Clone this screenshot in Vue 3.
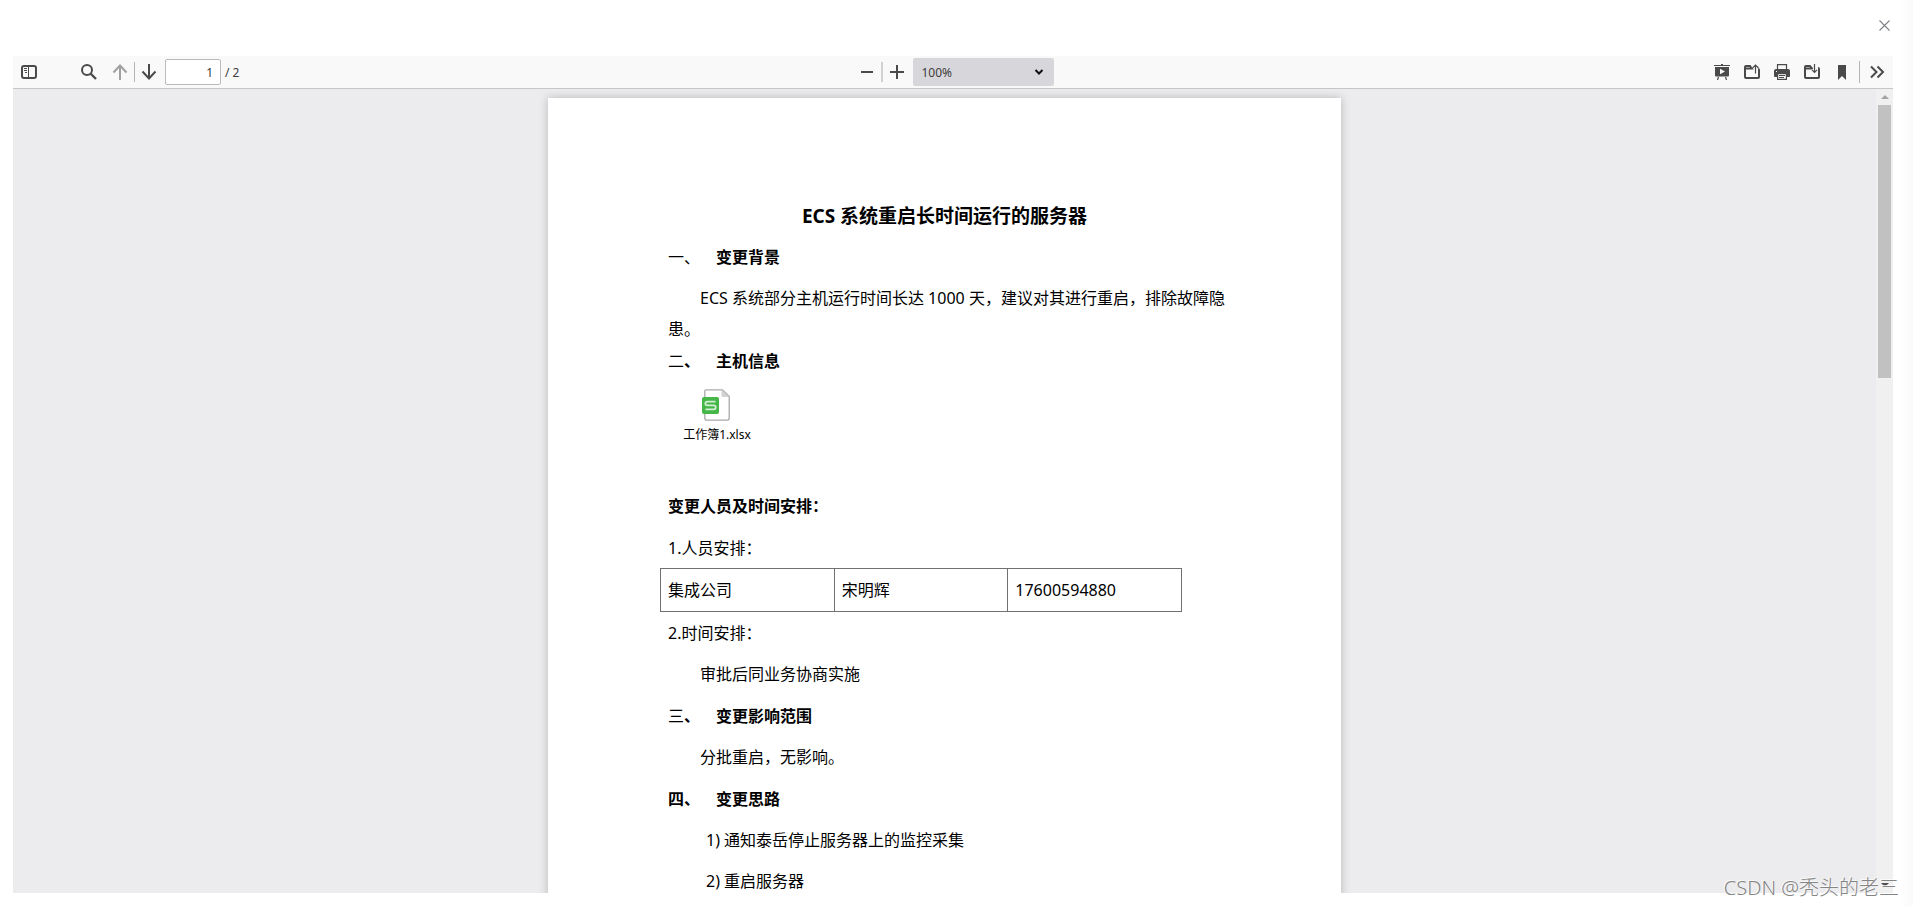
<script setup>
import { ref } from 'vue'

const pageNumber = ref('1')
const scale = ref('100%')
const scales = ['50%', '75%', '100%', '125%', '150%', '200%']
</script>

<template>
  <div class="dialog">
    <header class="dialog-head">
      <button class="close" type="button" aria-label="关闭">
        <svg width="11" height="11" viewBox="0 0 11 11"><path d="M.5.5l10 10M10.500.5l-10 10" stroke="#7f8287" stroke-width="1.100" fill="none" /></svg>
      </button>
    </header>

    <section class="viewer">
      <div class="toolbar">
        <div class="group left">
          <button class="tool" type="button" aria-label="切换侧栏">
            <svg viewBox="0 0 16 16"><rect x="1" y="2" width="14" height="12" rx="2" fill="none" stroke="#4a4a4a" stroke-width="2" /><path d="M7.500 2v12M3 4.500h3M3 6.500h3M4 8.500h2" stroke="#4a4a4a" fill="none" /></svg>
          </button>
          <button class="tool search" type="button" aria-label="查找">
            <svg viewBox="0 0 16 16"><circle cx="6" cy="6" r="5" fill="none" stroke="#4a4a4a" stroke-width="2" /><path d="M9.500 9.500l5.500 5.500" stroke="#4a4a4a" stroke-width="2.400" /></svg>
          </button>
          <button class="tool prev" type="button" aria-label="上一页" disabled>
            <svg viewBox="0 0 16 16"><path d="M8 16V1.500M1.500 8.500L8 1.500l6.500 7" fill="none" stroke="#4a4a4a" stroke-width="2" /></svg>
          </button>
          <span class="sep"></span>
          <button class="tool" type="button" aria-label="下一页">
            <svg viewBox="0 0 16 16"><path d="M8 0v14.500M1.500 7.500l6.500 7 6.500-7" fill="none" stroke="#4a4a4a" stroke-width="2" /></svg>
          </button>
          <input v-model="pageNumber" class="page-input" type="text" aria-label="页码" />
          <span class="total">/ 2</span>
        </div>

        <div class="group">
          <button class="tool" type="button" aria-label="缩小">
            <svg viewBox="0 0 16 16"><path d="M2 8h12" stroke="#4a4a4a" stroke-width="2" /></svg>
          </button>
          <span class="sep wide"></span>
          <button class="tool" type="button" aria-label="放大">
            <svg viewBox="0 0 16 16"><path d="M1 8h14M8 1v14" stroke="#4a4a4a" stroke-width="2" /></svg>
          </button>
          <span class="scale">
            <select v-model="scale" aria-label="缩放">
              <option v-for="s in scales" :key="s">{{ s }}</option>
            </select>
            <svg class="chevron" width="10" height="6" viewBox="0 0 10 6"><path d="M1.500 1L5 4.500 8.500 1" fill="none" stroke="#111" stroke-width="2" /></svg>
          </span>
        </div>

        <div class="group right">
          <button class="tool" type="button" aria-label="演示模式">
            <svg viewBox="0 0 16 16"><path fill="#4a4a4a" d="M0 1h7V0h2v1h7v1H0zM1 3h14v8.500a1 1 0 0 1-1 1H2a1 1 0 0 1-1-1zm5 1.800v5.400l5-2.700z" fill-rule="evenodd" /><path d="M4.500 13l-1 3M11.500 13l1 3" stroke="#4a4a4a" stroke-width="1.200" /></svg>
          </button>
          <button class="tool" type="button" aria-label="打开文件">
            <svg viewBox="0 0 16 16"><path d="M8 4.500L6 2H2a1 1 0 0 0-1 1v10a1 1 0 0 0 1 1h12a1 1 0 0 0 1-1V6a1 1 0 0 0-1-1M1 4.500h8.500" fill="none" stroke="#4a4a4a" stroke-width="2" /><path d="M11.500 9V1M8.500 4l3-3 3 3" fill="none" stroke="#f9f9fa" stroke-width="3" /><path d="M11.500 9.500V1M8.500 4l3-3 3 3" fill="none" stroke="#4a4a4a" stroke-width="1.200" /></svg>
          </button>
          <button class="tool" type="button" aria-label="打印">
            <svg viewBox="0 0 16 16"><path d="M3.500 6V.6h9V6" fill="none" stroke="#4a4a4a" stroke-width="1.200" /><path d="M2 5h12a2 2 0 0 1 2 2v5a1 1 0 0 1-1 1H1a1 1 0 0 1-1-1V7a2 2 0 0 1 2-2z" fill="#4a4a4a" /><rect x="2" y="7" width="1" height="1" fill="#fff" /><rect x="3.600" y="9.600" width="8.800" height="5.800" fill="#f9f9fa" stroke="#4a4a4a" stroke-width="1.200" /><path d="M5 11.500h6M5 13.500h5" stroke="#4a4a4a" /></svg>
          </button>
          <button class="tool" type="button" aria-label="下载">
            <svg viewBox="0 0 16 16"><path d="M8 4.500L6 2H2a1 1 0 0 0-1 1v10a1 1 0 0 0 1 1h12a1 1 0 0 0 1-1V5a1 1 0 0 0-1-1M1 4.500h8.500" fill="none" stroke="#4a4a4a" stroke-width="2" /><path d="M10.500 0v8M8 5.500l2.500 2.500 2.500-2.500" fill="none" stroke="#f9f9fa" stroke-width="3" /><path d="M10.500 0v8.500M8 5.800l2.500 2.500 2.500-2.500" fill="none" stroke="#4a4a4a" stroke-width="1.200" /></svg>
          </button>
          <button class="tool" type="button" aria-label="当前视图">
            <svg viewBox="0 0 16 16"><path d="M4 1h8v15l-4-4-4 4z" fill="#4a4a4a" /></svg>
          </button>
          <span class="sep last"></span>
          <button class="tool" type="button" aria-label="工具">
            <svg viewBox="0 0 16 16"><path d="M2 2.500L7.500 8 2 13.500M8.500 2.500L14 8l-5.500 5.500" fill="none" stroke="#4a4a4a" stroke-width="2" /></svg>
          </button>
        </div>
      </div>

      <div class="canvas">
        <div class="scroll-area">
          <article class="page">
            <h1>ECS 系统重启长时间运行的服务器</h1>
            <h2 class="first"><span class="num thin">一、</span>变更背景</h2>
            <p class="intro">ECS 系统部分主机运行时间长达 1000 天，建议对其进行重启，排除故障隐<br />患。</p>
            <h2 class="follow"><span class="num"><span class="thin">二</span>、</span>主机信息</h2>
            <figure class="attachment">
              <svg width="28" height="32" viewBox="0 0 28 32">
                <path d="M4 .8h16.500l6.700 6.700V29a2.200 2.200 0 0 1-2.200 2.200H5A2.200 2.200 0 0 1 2.800 29V2A1.200 1.200 0 0 1 4 .8z" fill="#fff" stroke="#a9a9a9" stroke-width="1.300" />
                <path d="M19.500 1v5.500a1.500 1.500 0 0 0 1.500 1.500h6z" fill="#d2d2d2" />
                <rect y="8" width="17" height="17" rx="2" fill="#45b648" />
                <path d="M13.500 12.700H5.200a1.800 1.800 0 0 0 0 3.700h6.600a1.900 1.900 0 0 1 0 3.900H3.500" fill="none" stroke="#d3efd3" stroke-width="1.800" />
              </svg>
              <figcaption>工作簿1.xlsx</figcaption>
            </figure>
            <h2 class="people">变更人员及时间安排：</h2>
            <p class="item">1.人员安排：</p>
            <table>
              <tbody>
                <tr><td>集成公司</td><td>宋明辉</td><td>17600594880</td></tr>
              </tbody>
            </table>
            <p class="after-table">2.时间安排：</p>
            <p class="indent">审批后同业务协商实施</p>
            <h2><span class="num"><span class="thin">三</span>、</span>变更影响范围</h2>
            <p class="indent">分批重启，无影响。</p>
            <h2><span class="num">四、</span>变更思路</h2>
            <p class="step">1) 通知泰岳停止服务器上的监控采集</p>
            <p class="step">2) 重启服务器</p>
          </article>
        </div>
        <div class="scrollbar" aria-hidden="true">
          <span class="arrow up"></span>
          <span class="thumb"></span>
          <span class="arrow down"></span>
        </div>
      </div>
    </section>

    <span class="watermark">CSDN @秃头的老三</span>
  </div>
</template>

<style>
body {
  margin: 0;
  background: #fff;
}
</style>

<style scoped>
.dialog {
  position: relative;
  box-sizing: border-box;
  display: flex;
  flex-direction: column;
  height: 100vh;
  padding: 0 20px 13px 13px;
  overflow: hidden;
  background: linear-gradient(to left, #fafafa, #fff 14px);
  font-family: "Noto Sans", "Noto Sans CJK SC", sans-serif;
}
.dialog-head {
  display: flex;
  flex: none;
  justify-content: flex-end;
  height: 56px;
}
.close {
  width: 17px;
  height: 17px;
  margin-top: 17px;
  padding: 3px;
  border: 0;
  background: none;
  line-height: 0;
}
.viewer {
  display: flex;
  flex: 1;
  flex-direction: column;
  min-height: 0;
}
.toolbar {
  display: grid;
  flex: none;
  grid-template-columns: 1fr auto 1fr;
  height: 32px;
  border-bottom: 1px solid #c6c6c8;
  background: #f9f9fa;
  color: #3c3c3d;
  font-size: 12px;
}
.group {
  display: flex;
  align-items: center;
}
.left {
  padding-left: 2px;
}
.right {
  justify-content: flex-end;
  gap: 2px;
  padding-right: 2px;
}
.tool {
  width: 28px;
  height: 28px;
  padding: 6px;
  border: 0;
  background: none;
  line-height: 0;
}
.tool svg {
  width: 16px;
  height: 16px;
}
.search {
  margin-left: 32px;
}
.prev {
  margin-left: 3px;
}
.prev:disabled {
  opacity: 0.5;
}
.sep {
  width: 1px;
  height: 20px;
  background: #b4b4b5;
}
.wide {
  width: 2px;
  background: #d2d2d4;
}
.last {
  height: 22px;
  margin: 0 1px;
}
.page-input {
  box-sizing: border-box;
  width: 56px;
  height: 26px;
  margin: 0 4px 0 2px;
  padding: 0 7px;
  border: 1px solid #bbbbbc;
  border-radius: 2px;
  background: #fff;
  color: inherit;
  font: inherit;
  text-align: right;
}
.scale {
  position: relative;
  margin-left: 2px;
}
.scale select {
  display: block;
  width: 141px;
  height: 28px;
  padding: 0 9px;
  border: 0;
  border-radius: 2px;
  background: #d7d7db;
  color: inherit;
  font: inherit;
  appearance: none;
}
.chevron {
  position: absolute;
  top: 11px;
  right: 10px;
  pointer-events: none;
}
.canvas {
  display: flex;
  flex: 1;
  min-height: 0;
  background: #ececee;
}
.scroll-area {
  flex: 1;
  overflow: hidden;
}
.scrollbar {
  display: flex;
  flex-direction: column;
  align-items: center;
  box-sizing: border-box;
  width: 17px;
  padding: 6px 0;
  background: #f0f0f0;
}
.arrow {
  border: 4px solid transparent;
}
.up {
  border-top: 0;
  border-bottom-color: #a3a3a3;
}
.down {
  margin-top: auto;
  border-bottom: 0;
  border-top-color: #505050;
}
.thumb {
  width: 13px;
  height: 34.5%;
  margin-top: 6px;
  background: #c1c1c1;
}
.page {
  box-sizing: border-box;
  width: 793px;
  min-height: 1122px;
  margin: 9px auto;
  padding: 102px 120px;
  background: #fff;
  box-shadow: 0 0 9px rgba(0, 0, 0, 0.22);
  color: #000;
  font-size: 16px;
  line-height: 32px;
}
h1 {
  margin: 0;
  font-size: 19px;
  font-weight: 700;
  line-height: 32px;
  text-align: center;
  white-space: nowrap;
}
h2 {
  margin: 10px 0 0;
  font-size: 16px;
  font-weight: 700;
}
.first {
  margin-top: 9px;
}
.num {
  display: inline-block;
  width: 48px;
}
.thin {
  font-weight: 400;
}
p {
  margin: 9px 0 0;
}
.intro {
  margin-top: 10px;
  line-height: 31px;
  text-indent: 32px;
  white-space: nowrap;
}
.follow {
  margin-top: 0;
}
.attachment {
  display: flex;
  flex-direction: column;
  align-items: center;
  width: 68px;
  margin: 12px 0 0 15px;
}
.attachment svg {
  margin-right: 3px;
}
.attachment figcaption {
  margin-top: 4px;
  font-size: 12px;
  line-height: 20px;
  white-space: nowrap;
}
.people {
  margin-top: 45px;
}
.item {
  margin-top: 10px;
}
table {
  width: 522px;
  margin: 4px 0 0 -8px;
  border-collapse: collapse;
  table-layout: fixed;
}
td {
  height: 42px;
  padding: 0 7px;
  border: 1px solid #707070;
}
.after-table {
  margin-top: 5px;
}
.indent {
  padding-left: 32px;
}
.step {
  padding-left: 38px;
}
.watermark {
  position: absolute;
  right: 14px;
  bottom: 4px;
  color: #848484;
  font-size: 20px;
  font-weight: 300;
  line-height: 28px;
  text-shadow: -1px -1px 0 rgba(255, 255, 255, 0.8);
  white-space: nowrap;
}
</style>
